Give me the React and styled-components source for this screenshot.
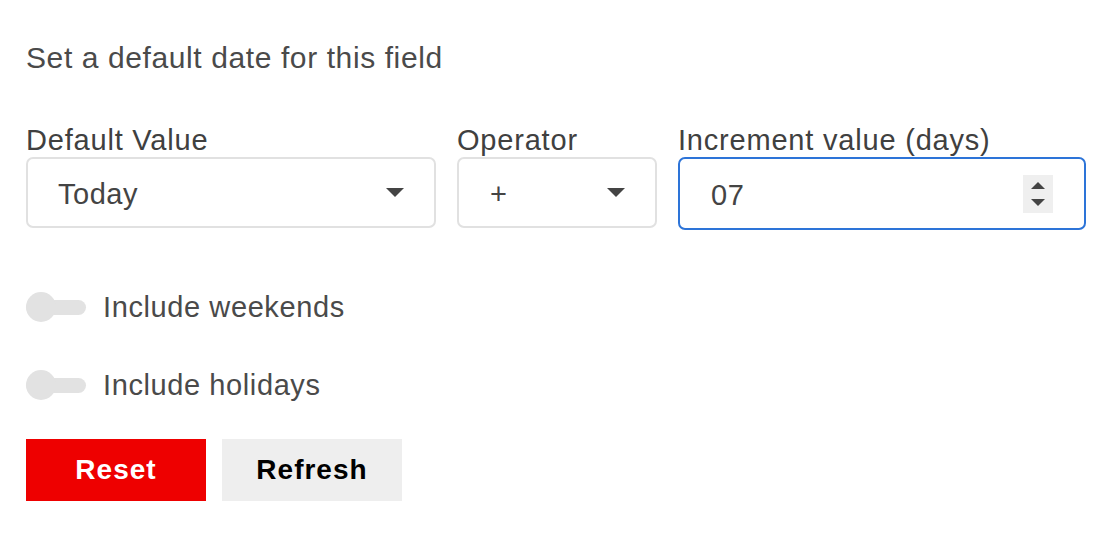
import React from "react";
import styled, { createGlobalStyle } from "styled-components";

const Global = createGlobalStyle`
  html, body { margin: 0; padding: 0; background: #ffffff; }
  body {
    font-family: "Liberation Sans", Helvetica, Arial, sans-serif;
    -webkit-font-smoothing: antialiased;
  }
`;

const Page = styled.div`
  padding: 41px 26px 0 26px;
  display: flex;
  flex-direction: column;
`;

const Heading = styled.div`
  font-size: 30px;
  line-height: 34px;
  letter-spacing: 0.6px;
  color: #4a4a4a;
`;

const FieldGrid = styled.div`
  margin-top: 49px;
  display: grid;
  grid-template-columns: 410px 200px 408px;
  column-gap: 21px;
`;

const Field = styled.div`
  display: flex;
  flex-direction: column;
`;

const Label = styled.div`
  font-size: 29px;
  line-height: 32px;
  letter-spacing: 0.8px;
  color: #404040;
  margin-bottom: 1px;
  white-space: nowrap;
`;

const Box = styled.div`
  box-sizing: border-box;
  height: ${(p) => (p.$focused ? 73 : 71)}px;
  border: 2px solid ${(p) => (p.$focused ? "#2d74d8" : "#e1e1e1")};
  border-radius: 7px;
  display: flex;
  align-items: center;
  justify-content: space-between;
  padding: 0 ${(p) => p.$padRight}px 0 ${(p) => p.$padLeft}px;
  font-size: 29px;
  letter-spacing: 0.5px;
  color: #444444;
  background: #ffffff;
`;

const Value = styled.span`
  padding-top: 3px;
`;

const Caret = styled.svg`
  width: 18px;
  height: 9px;
  display: block;
  flex: none;
`;

const Spinner = styled.div`
  width: 30px;
  height: 38px;
  background: #efefef;
  display: flex;
  flex-direction: column;
  align-items: center;
  justify-content: center;
  gap: 10px;
`;

const Arrow = styled.svg`
  width: 14px;
  height: 7px;
  display: block;
`;

const Toggles = styled.div`
  margin-top: 62px;
  display: flex;
  flex-direction: column;
  gap: 48px;
`;

const ToggleRow = styled.label`
  display: flex;
  align-items: center;
  gap: 17px;
  height: 30px;
  font-size: 29px;
  letter-spacing: 0.6px;
  color: #4a4a4a;
`;

const Track = styled.span`
  position: relative;
  width: 60px;
  height: 15px;
  border-radius: 8px;
  background: #e2e2e2;
  flex: none;
`;

const Knob = styled.span`
  position: absolute;
  left: 0;
  top: 50%;
  width: 30px;
  height: 30px;
  margin-top: -15px;
  border-radius: 50%;
  background: #e2e2e2;
`;

const Buttons = styled.div`
  margin-top: 39px;
  display: flex;
  gap: 16px;
`;

const Button = styled.button`
  width: 180px;
  height: 62px;
  border: none;
  border-radius: 0;
  padding: 0;
  font-family: inherit;
  font-size: 28px;
  font-weight: 700;
  letter-spacing: 1px;
  background: ${(p) => (p.$primary ? "#ee0000" : "#eeeeee")};
  color: ${(p) => (p.$primary ? "#ffffff" : "#000000")};
  cursor: pointer;
`;

const CaretIcon = () => (
  <Caret viewBox="0 0 18 9">
    <path d="M0 0 H18 L9 9 Z" fill="#444444" />
  </Caret>
);

const Toggle = ({ label }) => (
  <ToggleRow>
    <Track>
      <Knob />
    </Track>
    {label}
  </ToggleRow>
);

export default function App() {
  return (
    <>
      <Global />
      <Page>
        <Heading>Set a default date for this field</Heading>
        <FieldGrid>
          <Field>
            <Label>Default Value</Label>
            <Box $padLeft={30} $padRight={30}>
              <Value>Today</Value>
              <CaretIcon />
            </Box>
          </Field>
          <Field>
            <Label>Operator</Label>
            <Box $padLeft={31} $padRight={30}>
              <Value>+</Value>
              <CaretIcon />
            </Box>
          </Field>
          <Field>
            <Label>Increment value (days)</Label>
            <Box $focused $padLeft={31} $padRight={31}>
              <Value>07</Value>
              <Spinner>
                <Arrow viewBox="0 0 14 7">
                  <path d="M7 0 L14 7 H0 Z" fill="#444444" />
                </Arrow>
                <Arrow viewBox="0 0 14 7">
                  <path d="M0 0 H14 L7 7 Z" fill="#444444" />
                </Arrow>
              </Spinner>
            </Box>
          </Field>
        </FieldGrid>
        <Toggles>
          <Toggle label="Include weekends" />
          <Toggle label="Include holidays" />
        </Toggles>
        <Buttons>
          <Button $primary>Reset</Button>
          <Button>Refresh</Button>
        </Buttons>
      </Page>
    </>
  );
}
